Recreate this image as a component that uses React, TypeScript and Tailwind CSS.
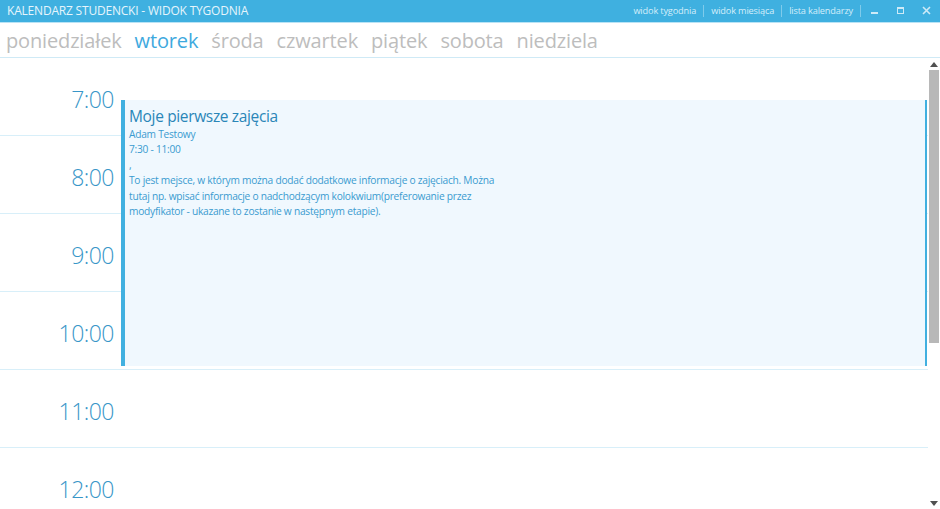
import React from "react";

const font = { fontFamily: '"Open Sans", "Noto Sans", sans-serif' };

const days = ["poniedziałek", "wtorek", "środa", "czwartek", "piątek", "sobota", "niedziela"];
const hours = ["7:00", "8:00", "9:00", "10:00", "11:00", "12:00"];

export default function App() {
  return (
    <div className="w-[940px] h-[509px] flex flex-col overflow-hidden bg-white" style={font}>
      {/* title bar */}
      <div className="h-[22px] bg-[#3fb0e0] flex items-center pl-[7px] pr-[1px] text-white">
        <div className="text-[12px] tracking-[-0.2px] text-[#e6f5fc]">KALENDARZ STUDENCKI - WIDOK TYGODNIA</div>
        <div className="ml-auto flex items-center text-[9.2px] tracking-[-0.15px] text-[#d4eefa]">
          <span>widok tygodnia</span>
          <span className="mx-[7px] w-px h-[12px] bg-[#7fcbeb]" />
          <span>widok miesiąca</span>
          <span className="mx-[7px] w-px h-[12px] bg-[#7fcbeb]" />
          <span>lista kalendarzy</span>
          <span className="ml-[7px] w-px h-[12px] bg-[#7fcbeb]" />
          <div className="w-[26px] flex justify-center">
            <div className="w-[7px] h-[2px] bg-[#cdeaf7] mt-[4px]" />
          </div>
          <div className="w-[26px] flex justify-center">
            <div className="w-[7px] h-[7px] border border-[#cdeaf7] border-t-2" />
          </div>
          <div className="w-[26px] flex justify-center">
            <svg width="9" height="9" viewBox="0 0 9 9">
              <path d="M1 1 L8 8 M8 1 L1 8" stroke="#cdeaf7" strokeWidth="1.6" />
            </svg>
          </div>
        </div>
      </div>
      <div className="h-px bg-[#b9e3f5]" />
      {/* day tabs */}
      <div className="h-[35px] border-b border-[#cfeaf6] flex items-center gap-[13px] pl-[6px] pt-[1px] text-[20px] tracking-[-0.15px] text-[#bdbdbd]">
        {days.map((d) => (
          <span key={d} className={d === "wtorek" ? "text-[#3ea9de]" : ""}>
            {d}
          </span>
        ))}
      </div>
      {/* body */}
      <div className="flex flex-1 min-h-0">
        <div className="relative w-[928px] overflow-hidden">
          {hours.map((h) => (
            <div key={h} className="h-[78px] border-b border-[#d8eff9] flex justify-end w-full">
              <div className="w-[114px] text-right pt-[25px] text-[23px] font-light leading-[32px] text-[#3896c8] tracking-[-0.5px]">
                {h}
              </div>
              <div className="flex-1" />
            </div>
          ))}
          {/* event */}
          <div className="absolute left-[121px] top-[42px] w-[806px] h-[266px] bg-[#f0f8fe] border-l-4 border-r-2 border-[#41b0e0] pl-[4px] pt-[5px] text-[#3a9bd0]">
            <div className="text-[15.5px] leading-[22px] tracking-[-0.35px] text-[#2a86b8]">Moje pierwsze zajęcia</div>
            <div className="text-[10.2px] leading-[15.4px] tracking-[-0.25px]">
              <div>Adam Testowy</div>
              <div>7:30 - 11:00</div>
              <div>,</div>
              <div>
                To jest mejsce, w którym można dodać dodatkowe informacje o zajęciach. Można
                <br />
                tutaj np. wpisać informacje o nadchodzącym kolokwium(preferowanie przez
                <br />
                modyfikator - ukazane to zostanie w następnym etapie).
              </div>
            </div>
          </div>
        </div>
        {/* scrollbar */}
        <div className="w-[12px] flex flex-col items-center">
          <div className="h-[12px] flex items-center justify-center">
            <svg width="8" height="5" viewBox="0 0 8 5">
              <path d="M0 5 L4 0 L8 5 Z" fill="#505050" />
            </svg>
          </div>
          <div className="w-[10px] h-[273px] bg-[#b8b8b8]" />
          <div className="flex-1" />
          <div className="h-[12px] flex items-center justify-center">
            <svg width="8" height="5" viewBox="0 0 8 5">
              <path d="M0 0 L4 5 L8 0 Z" fill="#505050" />
            </svg>
          </div>
        </div>
      </div>
    </div>
  );
}
